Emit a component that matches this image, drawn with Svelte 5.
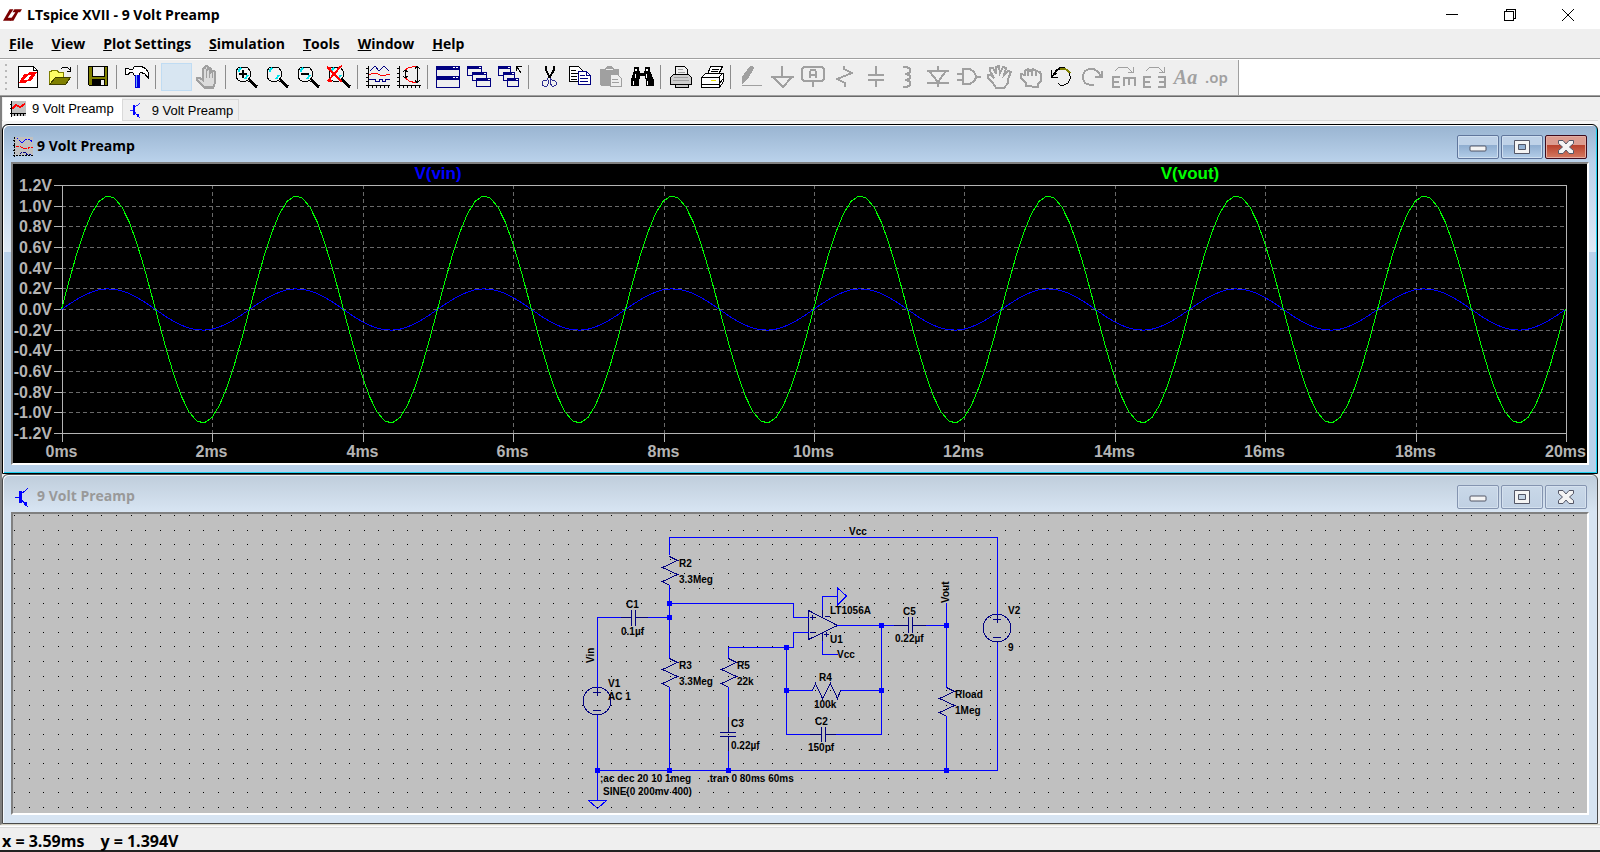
<script lang="ts">
    type Shape = [d: string, fill?: string, stroke?: string, width?: number];

    const navy = "#000080";
    const gray = "#a0a0a0";
    const lens = "M6 2h6l2 1l2 3v6l-2 3l-2 1h-6l-2 -1l-2 -3v-6l2 -3z";
    const glass: Shape[] = [
        [lens, "#f4f4f4", "#000", 1],
        ["M5 7v-2l2 -2M14 10l-3 4", "none", "#00e5ee", 2],
        ["M15 15l8 7", "none", "#000", 3],
    ];
    const axes: Shape = ["M2.5 1v22M0 20.5h24M0 3.5h2M0 8.5h2M0 12.5h2M0 16.5h2M6.5 20v3M10.5 20v3M14.5 20v3M18.5 20v3M22.5 20v3", "none", "#000", 1];

    const icons: Record<string, Shape[]> = {
        new: [
            ["M2.5 1.5h15l4 4v17h-19z", "#fff", "#000", 1],
            ["M17.5 1.5v4h4", "none", "#000", 1],
            ["M8 9h5l-5 6h4l-2 3h-7z", "#f00"],
            ["M13 7h8l-6 9h-4l4 -6h-4z", "#f00"],
        ],
        open: [
            ["M2.5 19v-13h2l1 -1h4l2 2h5v5", "#ffff66", "#808000", 1],
            ["M2.5 19.5l6 -7h15l-5 7z", "#808000", "#404000", 1],
            ["M14 4l2 -2h4l3 3M23.5 2v4h-4", "none", "#000", 1],
        ],
        save: [
            ["M2.5 1.5h19v19h-18l-1 -1z", "#808000", "#000", 1],
            ["M6.5 1.5h12v10h-12z", "#efefef", "#000", 1],
            ["M6 14h13v7h-13z", "#000"],
            ["M15 15h3v5h-3z", "#efefef"],
        ],
        hammer: [
            ["M0.5 3.5h3l1 1h3l2 -3h7l4 2l3 4v6l-4 -5l-4 -1l-2 3h-4l-2 -3h-3l-1 2h-3z", "#fff", "#000", 1],
            ["M10 10h5v13h-5z", "#0000e0"],
            ["M11 10h1v12h-1z", "#6fa8ff"],
        ],
        blank: [],
        hand: [
            ["M8 12v-8q1 -2 2 0v-2q1 -2 3 0v2q2 -2 3 0v3q2 -2 4 0v11l-2 5h-8l-3 -3l-5 -5v-2h3l3 2z", "#dcdcdc", gray, 2],
            ["M11 4v9M14 4v9M17 6v7M8 21h11", "none", gray, 1],
        ],
        zoomin: [...glass, ["M5 9h8M9 5v8", "none", "#000", 2]],
        zoompan: glass,
        zoomout: [...glass, ["M5 9h8", "none", "#000", 2]],
        zoomfit: [...glass, ["M0 2l15 15M14 1l-13 15M0 3h4M1 16h4M11 3l4 -2", "none", "#f00", 2]],
        plot: [
            axes,
            ["M4 6l5 -5l4 5l5 -5l5 5", "none", navy, 1],
            ["M3 10l4 -2l5 1l4 2l4 -1l4 -1", "none", "#f00", 1],
            ["M3 14.5h6v2h4v-2h3v2h3v-2h5", "none", navy, 1],
        ],
        axis: [
            axes,
            ["M7 6l4 -3l8 -2M7 12l5 4l7 2", "none", "#f00", 1],
            ["M8.5 5v8M6 7l2 -2l3 2M6 11l2 2l3 -2M20.5 1v17M18 4l2 -3l3 3M18 15l2 3l3 -3", "none", "#000", 1],
        ],
        tile: [
            ["M0.5 1.5h23v21h-23z", "#efefef", navy, 1],
            ["M0 1h24v4h-24zM0 11h24v4h-24z", navy],
            ["M17 2h2v1h-2zM20 2h2v1h-2zM17 12h2v1h-2zM20 12h2v1h-2z", "#fff"],
        ],
        cascade: [
            ["M0.5 1.5h14v9h-14z", "#efefef", navy, 1], ["M0 1h15v3h-15z", navy],
            ["M5.5 7.5h14v8h-14z", "#efefef", navy, 1], ["M5 7h15v3h-15z", navy],
            ["M9.5 13.5h14v8h-14z", "#efefef", navy, 1], ["M9 13h15v3h-15z", navy],
            ["M12 2h2v1h-2zM17 8h2v1h-2zM21 14h2v1h-2z", "#fff"],
        ],
        closeall: [
            ["M0.5 1.5h12v9h-12z", "#efefef", navy, 1], ["M0 1h13v3h-13z", navy],
            ["M5.5 7.5h11v8h-11z", "#efefef", navy, 1], ["M5 7h12v3h-12z", navy],
            ["M9.5 13.5h11v8h-11z", "#efefef", navy, 1], ["M9 13h12v3h-12z", navy],
            ["M10 2h2v1h-2zM14 8h2v1h-2zM18 14h2v1h-2z", "#fff"],
            ["M18.5 6v-4.5h5M19 2l4 6", "none", "#000", 1],
        ],
        cut: [
            ["M9 1v4l4 8M17 1v4l-5 8", "none", "#000", 2],
            ["M11 13l-1 2h-3l-2 2v3l2 1h3l1 -2v-4M13 13l2 2h2l2 2v3l-2 1h-2l-2 -3v-4", "none", "#2b2b90", 1],
        ],
        copy: [
            ["M1.5 1.5h9l4 4v11h-13z", "#fff", "#000", 1],
            ["M3 5.5h5M3 8.5h7M3 11.5h6M3 14.5h6", "none", "#000", 1],
            ["M10.5 6.5h8l4 4v9h-12z", "#fff", navy, 1],
            ["M12 10.5h5M12 13.5h8M12 16.5h8M18.5 6v4.5h4", "none", navy, 1],
        ],
        paste: [
            ["M1 4h5l2 -3h5l2 3h5v17h-18l-1 -1z", gray],
            ["M7 4.5h7", "none", "#efefef", 1],
            ["M11.5 9.5h7l4 4v8h-11z", "#efefef", gray, 1],
            ["M13 14.5h6M13 17.5h7", "none", gray, 1],
        ],
        find: [
            ["M4 2h5v4h1v2h4v-2h1v-4h5v4l4 9v6h-8v-7h-1v-3h-5v3h-1v7h-8v-6l3 -9z", "#000"],
            ["M5 4h2v2h-2zM16 4h2v2h-2zM5 9h1v4h-1zM16 9h1v4h-1zM3 16h1v4h-1zM17 16h1v4h-1z", "#fff"],
        ],
        preview: [
            ["M6.5 10v-8.5h9l3 3v5.5", "#efefef", "#000", 1],
            ["M4.5 9.5h15l3 3v7h-3v3h-13v-3h-5v-7z", "#cfcfcf", "#000", 1],
            ["M6 19.5h14", "none", "#000", 1],
            ["M9 4.5h5M9 7.5h7M5 12.5h14M4 15.5h16", "none", gray, 1],
        ],
        print: [
            ["M7.5 9.5l3 -8h12l-4 8z", "#fff", "#000", 1],
            ["M12 4.5h7M11 6.5h7", "none", "#000", 1],
            ["M1.5 12.5l4 -4h18v8l-4 6h-18z", "#fff", "#000", 1],
            ["M2 12.5h17.5v10M19 12l4 -4M2 19.5h17M19 19l4 -5", "none", "#000", 1],
            ["M11 15h5v1h-5z", "#e8e000"],
        ],
        wire: [
            ["M10 2l2 -1h2l1 2l-6 11l-4 3l-2 3v-8z", gray],
            ["M3 20.5h20", "none", gray, 1],
        ],
        ground: [["M12 1v10M1 12h23M3 12l10 10l9 -10", "none", gray, 2]],
        label: [
            ["M3 2h18l2 2v10l-2 2h-18l-2 -2v-10zM12 16v6", "none", gray, 2],
            ["M9 13v-6l1 -2h4l1 2v6M9 10h6", "none", gray, 2],
        ],
        resistor: [["M12 1v3l8 4l-15 6l8 4v4", "none", gray, 2]],
        capacitor: [["M13 1v9M13 15v7M5 10h16M5 15h16", "none", gray, 2]],
        inductor: [["M9 2h4l3 2v3l-3 2h-2h2l3 2v2l-3 2h-2h2l3 2v3l-3 2h-4", "none", gray, 2]],
        diode: [["M13 1v4M2 6h22M4 6l9 11l8 -11M2 18h22M13 17v5", "none", gray, 2]],
        gate: [["M1 9h5M1 15h5M7 4h7l4 3l2 4v2l-2 3l-4 3h-7zM20 12h5", "none", gray, 2]],
        move: [["M8 21l-3 -4l-4 -4v-3h3l3 3l-4 -7v-3h3l3 6v-7l3 -1l1 7l3 -6l3 1l-2 7l4 -4l3 1l-3 7v4l-4 5h-8z", "none", gray, 2]],
        drag: [["M8 21v-3l-5 -5v-4l4 1v-4l3 -2l2 2l3 -2l3 2l4 1l1 3v6l-3 3v3zM10 6v5M14 6v5M18 7v4", "none", gray, 2]],
        undo: [
            ["M4 11l3 -5l4 -3h5", "none", "#000", 2],
            ["M11 3.5h4l4 2l2 3", "none", "#808000", 2],
            ["M20 8l1 3v3l-2 4l-4 2h-4l-2 -2M2 5v7h7M2 12l6 -4", "none", "#000", 1],
        ],
        redo: [["M14 20h-4l-5 -2l-2 -4v-4l2 -4l4 -2h5l4 3l3 4M22 6v6h-7", "none", gray, 2]],
        rotate: [
            ["M4 6l4 -4h8l5 5M22 2v5h-5", "none", gray, 1],
            ["M9 12h-7v10h7M2 17h6M13 21v-8h11v8M18 13v7", "none", gray, 2],
        ],
        mirror: [
            ["M4 6l4 -4h8l5 5M22 2v5h-5", "none", gray, 1],
            ["M9 12h-7v10h7M2 17h6M16 12h7v10h-7M17 17h6", "none", gray, 2],
        ],
    };

    const groups = [
        [["new", "New Schematic"], ["open", "Open"]],
        [["save", "Save"]],
        [["hammer", "Control Panel"]],
        [["blank", "Run"], ["hand", "Halt"]],
        [["zoomin", "Zoom to rectangle"], ["zoompan", "Pan"], ["zoomout", "Zoom back"], ["zoomfit", "Zoom full extents"]],
        [["plot", "Autorange"], ["axis", "Axis range"]],
        [["tile", "Tile windows"], ["cascade", "Cascade windows"], ["closeall", "Close all windows"]],
        [["cut", "Cut"], ["copy", "Copy"], ["paste", "Paste"], ["find", "Find"]],
        [["preview", "Print Preview"], ["print", "Print"]],
        [
            ["wire", "Wire"], ["ground", "Ground"], ["label", "Label Net"], ["resistor", "Resistor"],
            ["capacitor", "Capacitor"], ["inductor", "Inductor"], ["diode", "Diode"], ["gate", "Component"],
            ["move", "Move"], ["drag", "Drag"], ["undo", "Undo"], ["redo", "Redo"],
            ["rotate", "Rotate"], ["mirror", "Mirror"], ["text", "Text"], ["op", "SPICE Directive"],
        ],
    ];

    const menus = ["File", "View", "Plot Settings", "Simulation", "Tools", "Window", "Help"];

    // waveform plot
    const plot = { left: 62, right: 1566, top: 185, bottom: 433 };
    const zeroY = (plot.top + plot.bottom) / 2;
    const perVolt = (plot.bottom - plot.top) / 2.4;
    const yTicks = Array.from({ length: 13 }, (_, i) => ({
        y: Math.round(plot.top + (i * (plot.bottom - plot.top)) / 12) + 0.5,
        text: (1.2 - i * 0.2).toFixed(1).replace("-0.0", "0.0") + "V",
    }));
    const xTicks = Array.from({ length: 11 }, (_, i) => ({
        x: Math.round(plot.left + (i * (plot.right - plot.left)) / 10) + 0.5,
        text: `${i * 2}ms`,
    }));

    function wave(amplitude: number) {
        const steps = 200;
        const points = [];
        for (let i = 0; i <= steps; i++) {
            const x = plot.left + (i / steps) * (plot.right - plot.left) - 0.5;
            const y = zeroY + 0.5 - amplitude * perVolt * Math.sin((i / steps) * 16 * Math.PI);
            points.push(`${x.toFixed(1)},${y.toFixed(1)}`);
        }
        return points.join(" ");
    }

    // schematic
    let dots = "";
    for (let row = 0; row < 21; row++) {
        for (let col = 0; col < 108; col++) {
            dots += `M${Math.round(14 + col * 14.57)} ${Math.round(515 + row * 14.6)}h1v1h-1z`;
        }
    }

    const wires = [
        "M669.5 555v-17.5h328v77", "M669.5 585v73", "M669.5 603.5h124v14h15", "M597.5 617.5h23M648 617.5h21",
        "M597.5 617v71M597.5 715v86", "M669.5 687v83", "M597.5 770.5h400v-128", "M728.5 658v-10.5h65v-15h15",
        "M728.5 687v30M728.5 751v19", "M786.5 647v87.5h23M836 734.5h45.5v-109M786.5 690.5h26M841 690.5h40",
        "M837 625.5h57M926 625.5h20", "M946.5 603v85M946.5 716v54", "M822.5 610v-13.5h15M822.5 641v13.5h15",
        "M588.5 800.5h18l-9 8zM837.5 588v17l9 -9z",
    ];
    const zigzag = "v1l8 4l-15 7l15 7l-15 7l7 4v2";
    const parts = [
        `M669.5 555.5${zigzag}`, `M669.5 657.5${zigzag}`, `M728.5 657.5${zigzag}`, `M946.5 686.5${zigzag}`,
        "M811.5 690.5h1l3 -7l7 15l8 -15l7 15l3 -8h1",
        "M620 617.5h11M636 617.5h12M631.5 610v16M635.5 610v16",
        "M894 625.5h14M913 625.5h13M908.5 617v16M912.5 617v16",
        "M809 734.5h12M825 734.5h11M821.5 727v15M825.5 727v15",
        "M728.5 717v15M728.5 737v14M720 732.5h16M720 736.5h16",
        "M808.5 610.5v29l29 -14zM810 617.5h5M812.5 615v5M810 632.5h5M825 616.5h5M824 634.5h5M826.5 632v5",
        "M593 692.5h8M597.5 688v8M593 710.5h8", "M993 619.5h8M997.5 615v8M993 637.5h8",
        "M822.5 610v7M822.5 633v8M997.5 642v5",
    ];
    const nodes = [
        [669, 603], [669, 617], [786, 647], [786, 690], [881, 625], [881, 690], [946, 625],
        [597, 770], [669, 770], [728, 770], [946, 770],
    ];
    const labels: [number, number, string][] = [
        [849, 535, "Vcc"], [679, 567, "R2"], [679, 583, "3.3Meg"], [626, 608, "C1"], [621, 635, "0.1µf"],
        [608, 687, "V1"], [608, 700, "AC 1"], [679, 669, "R3"], [679, 685, "3.3Meg"], [737, 669, "R5"],
        [737, 685, "22k"], [731, 727, "C3"], [731, 749, "0.22µf"], [600, 782, ";ac dec 20 10 1meg"],
        [707, 782, ".tran 0 80ms 60ms"], [603, 795, "SINE(0 200mv 400)"], [830, 614, "LT1056A"],
        [830, 643, "U1"], [837, 658, "Vcc"], [903, 615, "C5"], [895, 642, "0.22µf"], [1008, 614, "V2"],
        [1008, 651, "9"], [819, 681, "R4"], [814, 708, "100k"], [815, 725, "C2"], [808, 751, "150pf"],
        [955, 698, "Rload"], [955, 714, "1Meg"],
    ];
</script>

{#snippet transistor()}
    <svg class="doc-icon" viewBox="0 0 20 20" aria-hidden="true">
        <path d="M2 10h5M8 7l5 -4l2 -2M8 12l4 5l3 3" fill="none" stroke="#00f" />
        <path d="M6 4h3v12h-3zM10 15h4v4h-2z" fill="#00f" />
    </svg>
{/snippet}

{#snippet controls(active: boolean)}
    <div class="controls">
        <button aria-label="Minimize">
            <svg viewBox="0 0 20 16"><rect x="2" y="7" width="16" height="5" rx="1" class="glyph" /></svg>
        </button>
        <button aria-label="Maximize">
            <svg viewBox="0 0 20 16"><path d="M2.5 1.5h15v13h-15zM6.5 5.5v5h7v-5z" class="glyph" fill-rule="evenodd" /></svg>
        </button>
        <button aria-label="Close" class:danger={active}>
            <svg viewBox="0 0 20 16">
                <path d="M2.5 1.5h4.5l3 3.5l3 -3.5h4.5v3l-4 3.5l4 3.5v3h-4.5l-3 -3.5l-3 3.5h-4.5v-3l4 -3.5l-4 -3.5z" class="glyph" />
            </svg>
        </button>
    </div>
{/snippet}

<div class="app">
    <header class="titlebar">
        <svg class="logo" viewBox="0 0 20 14" aria-hidden="true">
            <path d="M7 1h4l-6 9h5l-2 3h-8z" fill="#7a0000" />
            <path d="M12 1h8l-2 3h-2l-5 9h-4l6 -9h-3z" fill="#7a0000" />
        </svg>
        <h1>LTspice XVII - 9 Volt Preamp</h1>
        <div class="caption">
            <button aria-label="Minimize"><svg viewBox="0 0 12 12"><path d="M0 5.5h12" /></svg></button>
            <button aria-label="Restore"><svg viewBox="0 0 12 12"><path d="M0.5 2.5h9v9h-9zM2.5 2v-1.5h9v9h-2" /></svg></button>
            <button aria-label="Close"><svg viewBox="0 0 12 12"><path d="M0 0l12 12M12 0l-12 12" /></svg></button>
        </div>
    </header>

    <nav class="menubar">
        {#each menus as menu}
            <button><u>{menu[0]}</u>{menu.slice(1)}</button>
        {/each}
    </nav>

    <div class="toolbar-row">
        <div class="toolbar" role="toolbar" aria-label="Standard">
            <span class="grip"></span>
            {#each groups as group}
                <div class="group">
                    {#each group as [name, title]}
                        <button class:selected={name === "blank"} aria-label={title}>
                            {#if name === "text"}
                                <span class="aa">Aa</span>
                            {:else if name === "op"}
                                <span class="op">.op</span>
                            {:else}
                                <svg viewBox="0 0 25 24">
                                    {#each icons[name] as [d, fill, stroke, width]}
                                        <path {d} {fill} {stroke} stroke-width={width} />
                                    {/each}
                                </svg>
                            {/if}
                        </button>
                    {/each}
                </div>
            {/each}
        </div>
    </div>

    <main class="workspace">
        <div class="tabs" role="tablist">
            <button class="tab current" role="tab" aria-selected="true">
                <svg class="tab-icon" viewBox="0 0 16 16" aria-hidden="true">
                    <path d="M1 0h15v15h-15z" fill="#c0c0c0" />
                    <path d="M1.5 0v16M0 12.5h16M0 3.5h2M0 7.5h2M4.5 12v3M7.5 12v3M10.5 12v3M13.5 12v3" stroke="#000" />
                    <path d="M2 8l4 -4l4 2l5 -3" fill="none" stroke="#f00" stroke-width="2" />
                </svg>
                9 Volt Preamp
            </button>
            <button class="tab" role="tab" aria-selected="false">
                {@render transistor()}
                9 Volt Preamp
            </button>
        </div>

        <section class="window active">
            <div class="window-title">
                <svg class="doc-icon" viewBox="0 0 20 20" aria-hidden="true">
                    <path d="M1 0h19v18h-19z" fill="#c0c0c0" />
                    <path d="M1.5 0v20M0 18.5h20M0 3.5h2M0 8.5h2M0 13.5h2" stroke="#000" stroke-dasharray="2 1" />
                    <path d="M4 1l5 5l4 -4h4l2 3" fill="none" stroke="#00f" stroke-dasharray="2 1" />
                    <path d="M3 9.5h4l4 2h3l3 -1h3" fill="none" stroke="#f00" stroke-dasharray="3 1" />
                    <path d="M7 17l2 -2h4v2h5" fill="none" stroke="#000080" stroke-dasharray="3 1" />
                </svg>
                <h2>9 Volt Preamp</h2>
                {@render controls(true)}
            </div>
            <div class="client">
                <svg class="plot" viewBox="13 164 1574 299" role="img" aria-label="V(vin) and V(vout) over 20ms">
                    <g class="grid">
                        {#each yTicks.slice(1, -1) as { y }}
                            <path d="M{plot.left} {y}H{plot.right}" />
                        {/each}
                        {#each xTicks.slice(1, -1) as { x }}
                            <path d="M{x} {plot.top}V{plot.bottom}" />
                        {/each}
                    </g>
                    <g class="axis">
                        <path d="M62.5 185.5H1566.5V433.5H62.5z" />
                        {#each yTicks as { y }}
                            <path d="M54 {y}h8" />
                        {/each}
                        {#each xTicks as { x }}
                            <path d="M{x} 433v9" />
                        {/each}
                    </g>
                    {#each yTicks as { y, text }}
                        <text x="52" y={y + 5.5} text-anchor="end">{text}</text>
                    {/each}
                    {#each xTicks as { x, text }}
                        <text x={x - 1} y="457" text-anchor="middle">{text}</text>
                    {/each}
                    <polyline class="vin" points={wave(0.2)} />
                    <polyline class="vout" points={wave(1.1)} />
                    <text class="trace vin-name" x="438" y="179" text-anchor="middle">V(vin)</text>
                    <text class="trace vout-name" x="1190" y="179" text-anchor="middle">V(vout)</text>
                </svg>
            </div>
        </section>

        <section class="window">
            <div class="window-title">
                {@render transistor()}
                <h2>9 Volt Preamp</h2>
                {@render controls(false)}
            </div>
            <div class="client">
                <svg class="schematic" viewBox="13 514 1574 299" role="img" aria-label="Preamp schematic">
                    <path d={dots} fill="#000" />
                    {#each parts as d}
                        <path class="part" {d} />
                    {/each}
                    <circle class="part" cx="597" cy="701" r="14" />
                    <circle class="part" cx="997" cy="628" r="14" />
                    {#each wires as d}
                        <path class="wire" {d} />
                    {/each}
                    {#each nodes as [x, y]}
                        <rect x={x - 2} y={y - 2} width="5" height="5" fill="#00f" />
                    {/each}
                    {#each labels as [x, y, text]}
                        <text {x} {y}>{text}</text>
                    {/each}
                    <text transform="translate(594 663) rotate(-90)">Vin</text>
                    <text transform="translate(949 603) rotate(-90)">Vout</text>
                </svg>
            </div>
        </section>
    </main>

    <footer class="status">
        <span>x = 3.59ms</span>
        <span>y = 1.394V</span>
    </footer>
</div>

<style>
    :global(body) {
        background: #efefef;
    }

    .app {
        font-family: "Open Sans", "Noto Sans", sans-serif;
        font-size: 14px;
        font-weight: 700;
        color: #000;
        background: #efefef;
    }

    button {
        font: inherit;
        color: inherit;
        background: none;
        border: 0;
        padding: 0;
    }
    svg {
        display: block;
        shape-rendering: crispEdges;
    }
    h1,
    h2 {
        margin: 0;
        font-size: 14px;
        line-height: 20px;
    }

    .titlebar {
        display: flex;
        align-items: center;
        height: 29px;
        padding: 0 3px;
        background: #fff;
    }
    .logo {
        width: 19px;
        height: 14px;
        margin-right: 5px;
        shape-rendering: auto;
    }
    .caption {
        display: flex;
        margin-left: auto;
    }
    .caption button {
        display: grid;
        place-items: center;
        width: 58px;
        height: 28px;
    }
    .caption svg {
        width: 12px;
        height: 12px;
        fill: none;
        stroke: #000;
    }

    .menubar {
        display: flex;
        gap: 18px;
        height: 29px;
        padding-left: 9px;
        border-bottom: 1px solid #a0a0a0;
    }

    .toolbar-row {
        background: #fff;
        border-top: 1px solid #fff;
        border-bottom: 1px solid #696969;
        box-shadow: inset 0 -1px #a0a0a0;
    }
    .toolbar {
        display: flex;
        align-items: center;
        box-sizing: border-box;
        width: max-content;
        height: 35px;
        margin-bottom: 1px;
        padding: 0 6px 1px 0;
        background: #efefef;
        border-right: 1px solid #a0a0a0;
    }
    .grip {
        width: 2px;
        height: 26px;
        margin: 0 6px 0 5px;
        background: repeating-linear-gradient(#b8b8b8 0 2px, transparent 2px 6px);
    }
    .group {
        display: flex;
    }
    .group + .group::before {
        content: "";
        width: 1px;
        margin: 2px 5px 2px 2px;
        background: #8c8c8c;
    }
    .group button {
        display: grid;
        place-items: center;
        box-sizing: border-box;
        width: 31px;
        height: 28px;
    }
    .group svg {
        width: 25px;
        height: 24px;
        fill: none;
    }
    .group .selected {
        background: #d8e6f2;
        border: 1px solid #c0dcf3;
    }
    .aa,
    .op {
        color: #a0a0a0;
        font-family: "Liberation Serif", serif;
        font-size: 20px;
        font-style: italic;
        line-height: 24px;
    }
    .op {
        font-family: "Noto Sans", sans-serif;
        font-size: 15px;
        font-style: normal;
        font-weight: 600;
        line-height: 20px;
    }

    .workspace {
        padding-right: 2px;
        border-left: 2px solid #808080;
        border-bottom: 1px solid #d6d3c4;
    }
    .tabs {
        display: flex;
        align-items: flex-start;
        box-sizing: border-box;
        height: 27px;
        padding: 1px 0 0 1px;
        font-family: "Liberation Sans", Arial, sans-serif;
        font-size: 13px;
        font-weight: 400;
        background: linear-gradient(#efefef 23px, #d9d9d9 23px 24px, #f6f6f6 24px);
    }
    .tabs button {
        font-weight: 400;
    }
    .tab {
        display: flex;
        align-items: center;
        gap: 6px;
        box-sizing: border-box;
        height: 22px;
        margin-top: 1px;
        padding: 0 5px;
        border: 1px solid #d9d9d9;
    }
    .tab.current {
        height: 23px;
        margin-top: 0;
        padding: 0 7px 2px 6px;
        background: #fff;
        border-color: #fff;
    }
    .tab-icon {
        width: 16px;
        height: 16px;
    }
    .tab .doc-icon {
        width: 16px;
        height: 16px;
        margin-right: 2px;
    }

    .window {
        padding: 0 8px 8px;
        background: linear-gradient(#bfcddb, #d7e4f2 36px);
        border: 1px solid #4a4a4a;
        border-radius: 6px 6px 0 0;
        box-shadow: inset 1px 1px #f4f8fc;
    }
    .window.active {
        background: linear-gradient(#99b4d1, #b9d1ea 36px, #dfeaf6 127px, #b9d1ea 127px);
        border-color: #000;
        box-shadow:
            inset 1px 1px #fff,
            inset -1px -1px #1cd0f0;
    }
    .window-title {
        display: flex;
        align-items: center;
        height: 37px;
        padding: 0 2px;
        color: #999;
    }
    .active .window-title {
        color: #000;
    }
    .window-title h2 {
        padding-top: 5px;
    }
    .doc-icon {
        width: 20px;
        height: 20px;
        margin-right: 4px;
    }
    .window-title .doc-icon {
        margin-top: 6px;
    }
    .controls {
        display: flex;
        gap: 2px;
        margin: 6px 0 0 auto;
    }
    .controls button {
        display: grid;
        place-items: center;
        box-sizing: border-box;
        width: 42px;
        height: 24px;
        border: 1px solid #8494b0;
        border-radius: 2px;
        background: linear-gradient(#c9d8e8, #c0d0e3);
        box-shadow: inset 0 0 0 1px #d5e1ee;
    }
    .active .controls button {
        border-color: #60769c;
        background: linear-gradient(#bfd2e8 0 42%, #8fadd0 42%, #b3cde8);
        box-shadow: inset 0 0 0 1px #cfdff0;
    }
    .active .controls .danger {
        border-color: #3d0a1c;
        background: linear-gradient(#dc9c90 0 42%, #b8412c 42%, #d57a62);
        box-shadow: inset 0 0 0 1px #e3ada2;
    }
    .controls svg {
        width: 20px;
        height: 16px;
        shape-rendering: auto;
    }
    .glyph {
        fill: #f4f4f4;
        stroke: #535666;
    }

    .client {
        border: 2px solid;
        border-color: #808080 #fff #fff #808080;
    }
    .client svg {
        width: 100%;
    }
    .plot {
        background: #000;
    }
    .plot text {
        font: 700 16px "Liberation Sans", Arial, sans-serif;
        fill: #b4b4b4;
    }
    .plot .trace {
        font-size: 17px;
    }
    .plot .vin-name {
        fill: #00f;
    }
    .plot .vout-name {
        fill: #0f0;
    }
    .grid path {
        stroke: #696969;
        stroke-dasharray: 4 3;
    }
    .axis path {
        fill: none;
        stroke: #b4b4b4;
    }
    .vin,
    .vout {
        fill: none;
        stroke: #00f;
    }
    .vout {
        stroke: #0f0;
    }

    .schematic {
        background: #c0c0c0;
    }
    .schematic text {
        font: 700 10px "Liberation Sans", Arial, sans-serif;
        fill: #000;
    }
    .wire,
    .part {
        fill: none;
        stroke: #00f;
    }
    .part {
        stroke: #000080;
    }

    .status {
        display: flex;
        gap: 16px;
        height: 22px;
        margin-top: 2px;
        padding-left: 2px;
        font-size: 15px;
        line-height: 26px;
        border-top: 1px solid #d9d9d9;
        border-bottom: 2px solid #222;
        box-shadow: 0 -1px #fff;
    }
    .status span {
        font-size: 16px;
    }
</style>
